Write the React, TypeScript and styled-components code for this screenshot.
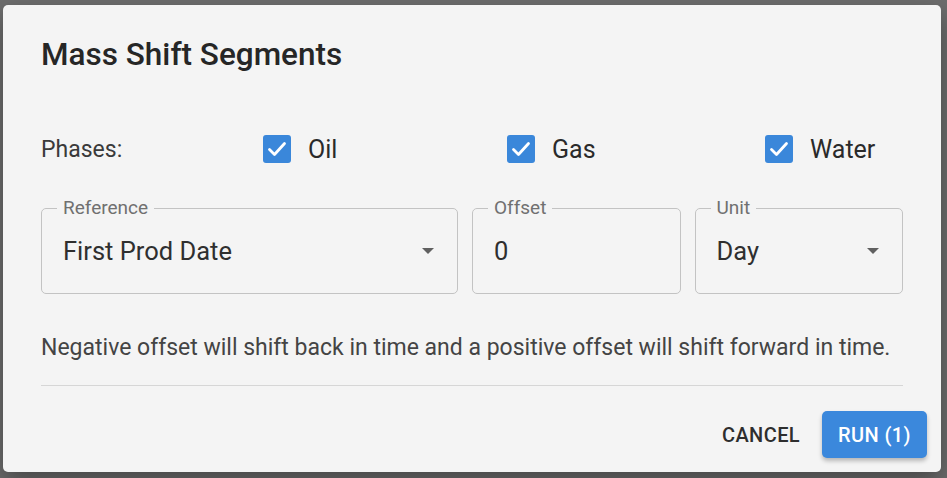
import React from 'react';
import styled, { createGlobalStyle } from 'styled-components';

const GlobalStyle = createGlobalStyle`
  html, body { margin: 0; padding: 0; }
  body {
    background: #6d6d6d;
    font-family: Roboto, "Liberation Sans", Arial, sans-serif;
  }
`;

const Backdrop = styled.div`
  width: 947px;
  height: 478px;
  box-sizing: border-box;
  padding: 5px 6px 6px 3px;
  display: flex;
`;

const Dialog = styled.div`
  flex: 1;
  background: #f4f4f4;
  border-radius: 5px;
  box-shadow: 0 10px 24px rgba(0, 0, 0, 0.35);
  display: flex;
  flex-direction: column;
  padding: 0 38px;
  box-sizing: border-box;
`;

const Title = styled.h2`
  margin: 0;
  padding-top: 32px;
  font-size: 31.5px;
  font-weight: 500;
  color: #262626;
  line-height: 36px;
`;

const PhaseRow = styled.div`
  display: grid;
  grid-template-columns: 222px 244px 258px auto;
  align-items: center;
  margin-top: 56px;
  height: 40px;
`;

const PhaseLabel = styled.span`
  font-size: 23px;
  color: #3a3a3a;
`;

const CheckLabel = styled.label`
  display: flex;
  align-items: center;
  gap: 17px;
  font-size: 25px;
  color: #2a2a2a;
`;

const Box = styled.span`
  width: 28px;
  height: 28px;
  border-radius: 3px;
  background: #3a87da;
  display: flex;
  align-items: center;
  justify-content: center;
`;

const Fields = styled.div`
  display: grid;
  grid-template-columns: 2fr 1fr 1fr;
  gap: 14px;
  margin-top: 29px;
`;

const Field = styled.fieldset`
  margin: 0;
  height: 96px;
  box-sizing: border-box;
  border: 1px solid #c3c3c3;
  border-radius: 5px;
  padding: 0 23px 0 21px;
  display: flex;
  align-items: center;
  justify-content: space-between;
`;

const Legend = styled.legend`
  padding: 0 6px;
  margin-left: -6px;
  font-size: 19px;
  color: #707070;
  line-height: 20px;
`;

const Value = styled.span`
  font-size: 25.5px;
  color: #2f2f2f;
  margin-top: -9px;
`;

const Arrow = styled.span`
  width: 0;
  height: 0;
  border-left: 6px solid transparent;
  border-right: 6px solid transparent;
  border-top: 6px solid #606060;
  margin-top: -9px;
`;

const Hint = styled.p`
  margin: 40px 0 0;
  font-size: 23px;
  color: #444;
  line-height: 28px;
`;

const Divider = styled.hr`
  margin: 23px 0 0;
  border: 0;
  border-top: 1px solid #d6d6d6;
`;

const Actions = styled.div`
  display: flex;
  justify-content: flex-end;
  align-items: center;
  gap: 6px;
  margin-top: 25px;
  margin-right: -24px;
`;

const Button = styled.button<{ $primary?: boolean }>`
  font-family: Roboto, "Liberation Sans", Arial, sans-serif;
  font-size: 20px;
  font-weight: 500;
  letter-spacing: 0.4px;
  text-transform: uppercase;
  border: 0;
  border-radius: 5px;
  height: 47px;
  padding: 0 16px;
  cursor: pointer;
  color: ${p => (p.$primary ? '#fff' : '#2e2e2e')};
  background: ${p => (p.$primary ? '#3b88dc' : 'transparent')};
  box-shadow: ${p => (p.$primary ? '0 3px 4px rgba(0,0,0,0.25)' : 'none')};
`;

const Check = ({ label }: { label: string }) => (
  <CheckLabel>
    <Box>
      <svg width="24" height="24" viewBox="0 0 24 24">
        <path d="M4.5 12.5 L9.5 17.5 L19.5 6.5" fill="none" stroke="#fff" strokeWidth="2.8" strokeLinecap="round" strokeLinejoin="round" />
      </svg>
    </Box>
    {label}
  </CheckLabel>
);

export default function App() {
  return (
    <>
      <GlobalStyle />
      <Backdrop>
        <Dialog>
          <Title>Mass Shift Segments</Title>
          <PhaseRow>
            <PhaseLabel>Phases:</PhaseLabel>
            <Check label="Oil" />
            <Check label="Gas" />
            <Check label="Water" />
          </PhaseRow>
          <Fields>
            <Field>
              <Legend>Reference</Legend>
              <Value>First Prod Date</Value>
              <Arrow />
            </Field>
            <Field>
              <Legend>Offset</Legend>
              <Value>0</Value>
            </Field>
            <Field>
              <Legend>Unit</Legend>
              <Value>Day</Value>
              <Arrow />
            </Field>
          </Fields>
          <Hint>Negative offset will shift back in time and a positive offset will shift forward in time.</Hint>
          <Divider />
          <Actions>
            <Button>Cancel</Button>
            <Button $primary>Run (1)</Button>
          </Actions>
        </Dialog>
      </Backdrop>
    </>
  );
}
